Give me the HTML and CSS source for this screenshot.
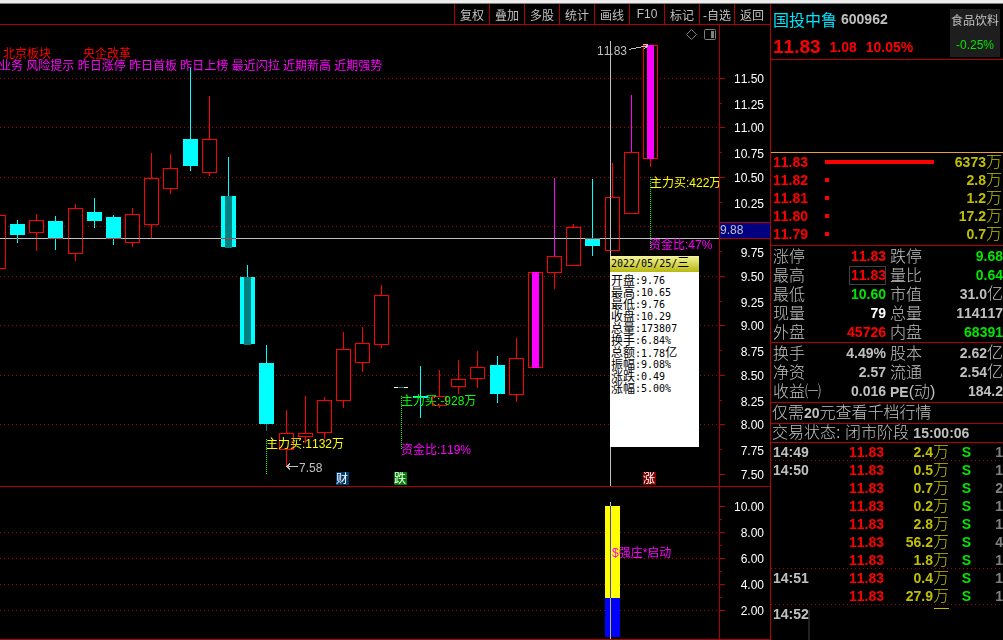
FILE: index.html
```html
<!DOCTYPE html>
<html lang="zh-CN">
<head>
<meta charset="utf-8">
<title>国投中鲁 600962</title>
<link rel="stylesheet" href="styles.css">
</head>
<body>
<div class="strip"></div>
<div class="app">
  <main class="left">
    <nav class="toolbar">
      <button type="button">复权</button><button type="button">叠加</button><button type="button">多股</button><button type="button">统计</button><button type="button">画线</button><button type="button">F10</button><button type="button">标记</button><button type="button">-自选</button><button type="button">返回</button>
    </nav>
    <section class="kline">
      <svg class="chart" viewBox="0 25 770 462">
        <defs><clipPath id="plot"><rect x="0" y="25" width="719" height="461"/></clipPath></defs>
        <path class="grid" d="M0 78.5H719M0 127.5H719M0 177.5H719M0 226.5H719M0 276.5H719M0 325.5H719M0 375.5H719M0 424.5H719"/>
        <path class="frame" d="M719.5 25V486M0 486.5H770M720 78.5h5M720 127.5h5M720 177.5h5M720 226.5h5M720 276.5h5M720 325.5h5M720 375.5h5M720 424.5h5M720 474.5h5M720 103.5h2M720 152.5h2M720 202.5h2M720 251.5h2M720 301.5h2M720 350.5h2M720 400.5h2M720 449.5h2"/>
        <!-- wicks -->
        <path class="up" d="M36.5 214V251M75.5 204V261M132.5 208V247M151.5 153V239M170.5 154V194M209.5 96V176M286.5 410V466M305.5 396V443M324.5 397V439M343.5 332V408M362.5 327V372M381.5 285V348M439.5 370V408M458.5 360V394M477.5 351V388M516.5 338V402M554.5 273V289M573.5 224V227M612.5 163V197M650.5 159V167"/>
        <path class="down" d="M17.5 220V243M55.5 216V250M94.5 198V228M113.5 215V245M190.5 68V171M228.5 157V196M247.5 265V277M266.5 345V363M420.5 366V418M497.5 356V403M592.5 179V256M413 396.5h15M413 397.5h15"/>
        <path class="hot" d="M554.5 178V256M631.5 95V152"/>
        <path class="deep" d="M266.5 424V431"/>
        <!-- rising bodies -->
        <g class="up">
          <rect x="-9.5" y="215.5" width="15" height="53"/><rect x="29.5" y="220.5" width="14" height="12"/>
          <rect x="68.5" y="208.5" width="14" height="45"/><rect x="125.5" y="214.5" width="14" height="28"/>
          <rect x="144.5" y="178.5" width="14" height="46"/><rect x="163.5" y="168.5" width="14" height="20"/>
          <rect x="202.5" y="139.5" width="14" height="33"/><rect x="279.5" y="433.5" width="14" height="16"/>
          <rect x="298.5" y="433.5" width="14" height="3"/><rect x="317.5" y="400.5" width="14" height="32"/>
          <rect x="336.5" y="349.5" width="14" height="51"/><rect x="355.5" y="343.5" width="14" height="19"/>
          <rect x="374.5" y="295.5" width="14" height="49"/><rect x="432.5" y="396.5" width="14" height="9"/>
          <rect x="451.5" y="379.5" width="14" height="7"/><rect x="470.5" y="367.5" width="14" height="11"/>
          <rect x="509.5" y="358.5" width="14" height="36"/><rect x="528.5" y="272.5" width="14" height="95"/>
          <rect x="547.5" y="256.5" width="14" height="16"/><rect x="566.5" y="227.5" width="14" height="38"/>
          <rect x="605.5" y="197.5" width="14" height="53"/><rect x="624.5" y="152.5" width="14" height="61"/>
          <rect x="643.5" y="45.5" width="14" height="113"/>
        </g>
        <!-- falling bodies -->
        <path class="fall" d="M10 224h15v11h-15zM48 221h15v18h-15zM87 212h15v9h-15zM106 217h15v22h-15zM183 139h15v27h-15zM221 196h15v51h-15zM240 277h15v67h-15zM259 363h15v61h-15zM490 365h15v29h-15zM585 238h15v8h-15z"/>
        <path class="core" d="M225 196h7v52h-7zM244 277h7v68h-7zM398 387h6v1h-6z"/>
        <path class="surge" d="M532 272h7v96h-7zM647 45h7v114h-7z"/>
        <path class="flat" d="M394 387h4v1h-4zM404 387h4v1h-4z"/>
        <path class="drop" d="M266.5 439V474M401.5 396V450M650.5 177V248"/>
        <!-- crosshair -->
        <path class="cross" d="M0 238.5H719M610.5 41V486"/>
        <g class="note" clip-path="url(#plot)">
          <text class="red" x="3" y="58">北京板块</text><text class="red" x="83" y="58">央企改革</text>
          <text class="mag" x="-1" y="70">业务 风险提示 昨日涨停 昨日首板 昨日上榜 最近闪拉 近期新高 近期强势</text>
          <text class="yel" x="266" y="448">主力买:1132万</text>
          <text class="grn" x="401" y="405">主力买:-928万</text>
          <text class="mag" x="401" y="454">资金比:119%</text>
          <text class="yel" x="650" y="187">主力买:422万</text>
          <text class="mag" x="649" y="249">资金比:47%</text>
          <text class="gry" x="597" y="55">11.83</text><text class="gry" x="299" y="472">7.58</text>
        </g>
        <path class="arrow" d="M629 49.5L648 45.5M643 44.5H648M644 49L648 46M287 466.5H298M290 463.5L287 466.5L290 469.5"/>
        <path class="icon" d="M691.5 29.5L696.5 34.5L691.5 39.5L686.5 34.5Z"/>
        <rect class="icon" x="704.5" y="29.5" width="11" height="10" rx="1"/><rect class="iconfill" x="711" y="31" width="3" height="7"/>
        <g class="tag">
          <rect x="336" y="472" width="13" height="13" fill="#003870"/><text x="336" y="483">财</text>
          <rect x="394" y="472" width="13" height="13" fill="#008000"/><text x="394" y="483">跌</text>
          <rect x="643" y="472" width="13" height="13" fill="#800000"/><text x="643" y="483">涨</text>
        </g>
        <g class="scale">
          <text x="764" y="83">11.50</text><text x="764" y="109">11.25</text><text x="764" y="132">11.00</text><text x="764" y="158">10.75</text><text x="764" y="182">10.50</text><text x="764" y="208">10.25</text>
          <text x="764" y="257">9.75</text><text x="764" y="281">9.50</text><text x="764" y="307">9.25</text><text x="764" y="330">9.00</text><text x="764" y="356">8.75</text><text x="764" y="380">8.50</text><text x="764" y="406">8.25</text><text x="764" y="429">8.00</text><text x="764" y="455">7.75</text><text x="764" y="479">7.50</text>
        </g>
        <rect x="720" y="222" width="50" height="17" fill="#000080"/>
        <path class="frame" d="M720 222.5H770M720 238.5H770"/>
        <text class="gry" x="720" y="234">9.88</text>
      </svg>
      <aside class="tip">
        <h2>2022/05/25/<span>三</span></h2>
        <dl>
          <div><dt>开盘</dt><dd>:9.76</dd></div>
          <div><dt>最高</dt><dd>:10.65</dd></div>
          <div><dt>最低</dt><dd>:9.76</dd></div>
          <div><dt>收盘</dt><dd>:10.29</dd></div>
          <div><dt>总量</dt><dd>:173807</dd></div>
          <div><dt>换手</dt><dd>:6.84%</dd></div>
          <div><dt>总额</dt><dd>:1.78<span>亿</span></dd></div>
          <div><dt>振幅</dt><dd>:9.08%</dd></div>
          <div><dt>涨跌</dt><dd>:0.49</dd></div>
          <div><dt>涨幅</dt><dd>:5.00%</dd></div>
        </dl>
      </aside>
    </section>
    <section class="indicator">
      <svg class="chart" viewBox="0 487 770 153">
        <path class="grid" d="M0 532.5H719M0 558.5H719M0 584.5H719M0 610.5H719"/>
        <path class="frame" d="M719.5 487V639M0 639.5H770M720 506.5h5M720 532.5h5M720 558.5h5M720 584.5h5M720 610.5h5M720 519.5h2M720 545.5h2M720 571.5h2M720 597.5h2"/>
        <rect x="605" y="506" width="15" height="92" fill="#ff0"/><rect x="605" y="598" width="15" height="39" fill="#00f"/>
        <path class="cross" d="M610.5 502V639"/>
        <text class="mag" x="612" y="557">$强庄*启动</text>
        <g class="scale"><text x="764" y="511">10.00</text><text x="764" y="537">8.00</text><text x="764" y="563">6.00</text><text x="764" y="589">4.00</text><text x="764" y="615">2.00</text></g>
      </svg>
    </section>
  </main>

  <aside class="side">
    <header class="quote">
      <div class="ident"><h1>国投中鲁</h1><b>600962</b></div>
      <div class="price"><strong>11.83</strong><b>1.08</b><b>10.05%</b></div>
      <a class="sector" href="#sector">食品饮料<span>-0.25%</span></a>
    </header>
    <div class="blank"></div>
    <ul class="book">
      <li><b>11.83</b><i style="width:109px"></i><span><b>6373</b>万</span></li>
      <li><b>11.82</b><i style="width:4px"></i><span><b>2.8</b>万</span></li>
      <li><b>11.81</b><i style="width:4px"></i><span><b>1.2</b>万</span></li>
      <li><b>11.80</b><i style="width:4px"></i><span><b>17.2</b>万</span></li>
      <li><b>11.79</b><i style="width:4px"></i><span><b>0.7</b>万</span></li>
    </ul>
    <dl class="stats">
      <dt>涨停</dt><dd class="red">11.83</dd><dt>跌停</dt><dd class="green">9.68</dd>
      <dt>最高</dt><dd class="red boxed">11.83</dd><dt>量比</dt><dd class="green">0.64</dd>
      <dt>最低</dt><dd class="green">10.60</dd><dt>市值</dt><dd>31.0<span>亿</span></dd>
      <dt>现量</dt><dd class="white">79</dd><dt>总量</dt><dd>114117</dd>
      <dt>外盘</dt><dd class="red">45726</dd><dt>内盘</dt><dd class="green">68391</dd>
    </dl>
    <dl class="stats">
      <dt>换手</dt><dd>4.49%</dd><dt>股本</dt><dd>2.62<span>亿</span></dd>
      <dt>净资</dt><dd>2.57</dd><dt>流通</dt><dd>2.54<span>亿</span></dd>
      <dt>收益㈠</dt><dd>0.016</dd><dt><b>PE</b>(动)</dt><dd>184.2</dd>
    </dl>
    <p class="line">仅需<b>20</b>元查看千档行情</p>
    <p class="line status">交易状态: 闭市阶段 <b>15:00:06</b></p>
    <table class="tape">
      <tbody>
        <tr class="cut"><th>14:49</th><td>11.83</td><td>2.4<span>万</span></td><td>S</td><td>1</td></tr>
        <tr><th>14:50</th><td>11.83</td><td>0.5<span>万</span></td><td>S</td><td>1</td></tr>
        <tr><th></th><td>11.83</td><td>0.7<span>万</span></td><td>S</td><td>2</td></tr>
        <tr><th></th><td>11.83</td><td>0.2<span>万</span></td><td>S</td><td>1</td></tr>
        <tr><th></th><td>11.83</td><td>2.8<span>万</span></td><td>S</td><td>1</td></tr>
        <tr><th></th><td>11.83</td><td>56.2<span>万</span></td><td>S</td><td>4</td></tr>
        <tr class="cut"><th></th><td>11.83</td><td>1.8<span>万</span></td><td>S</td><td>1</td></tr>
        <tr><th>14:51</th><td>11.83</td><td>0.4<span>万</span></td><td>S</td><td>1</td></tr>
        <tr class="cut"><th></th><td>11.83</td><td>27.9<span>万</span></td><td>S</td><td>1</td></tr>
        <tr class="next"><th>14:52</th><td></td><td><div class="dash"></div></td><td></td><td></td></tr>
      </tbody>
    </table>
    <div class="rest"></div>
  </aside>
</div>
</body>
</html>
```
FILE: styles.css
```css
* { box-sizing: border-box; margin: 0; padding: 0; }
body {
  display: flex; flex-direction: column; min-height: 100vh;
  background: #000; color: #c0c0c0; overflow-x: hidden;
  font: 12px "Liberation Sans", "Noto Sans CJK SC", sans-serif;
  font-kerning: none;
}
.strip { height: 4px; background: #ededed; border-bottom: 1px solid #808080; }
.app { display: flex; flex: 1; }
.left { flex: 1; min-width: 0; }

.toolbar { display: flex; justify-content: flex-end; height: 21px; padding-right: 1px; border-bottom: 1px solid #b00000; }
.toolbar button {
  width: 35px; border: 0; border-left: 1px solid #b00000; background: none;
  color: #c0c0c0; font: inherit; white-space: nowrap; text-align: center;
}
.kline { position: relative; }
.chart { display: block; width: 100%; height: auto; }
.chart path, .chart rect { shape-rendering: crispEdges; }
.grid { stroke: #b00000; stroke-dasharray: 1 3; fill: none; }
.frame { stroke: #b00000; fill: none; }
.up, .up rect { stroke: #f00; fill: #000; }
.down { stroke: #0ff; fill: none; }
.hot { stroke: #f0f; fill: none; }
.deep { stroke: #008080; fill: none; }
.fall { fill: #0ff; }
.core { fill: #008080; }
.surge { fill: #f0f; }
.flat { fill: #fff; }
.drop { stroke: #0f0; stroke-dasharray: 1 1; fill: none; }
.cross { stroke: #c0c0c0; fill: none; mix-blend-mode: difference; }
.arrow { stroke: #c0c0c0; fill: none; }
.chart .icon { stroke: #808080; fill: none; shape-rendering: auto; }
.iconfill { fill: #808080; }
.chart .red { fill: #f00; }
.mag { fill: #f0f; }
.yel { fill: #ff0; }
.grn { fill: #0f0; }
.gry { fill: #c0c0c0; }
.tag text { fill: #fff; }
.scale text { fill: #fff; text-anchor: end; }

.tip {
  position: absolute; top: 231px; right: 71px; width: 89px; height: 191px;
  background: #fff; color: #000; font: 10px "DejaVu Sans Mono", "Noto Sans CJK SC", monospace;
}
.tip h2 {
  height: 16px; padding-left: 1px; font: inherit; line-height: 16px; white-space: nowrap;
  background: linear-gradient(#f4f49c, #b8b810);
}
.tip span, .tip dt { font-size: 12px; line-height: 12px; }
.tip dl { padding: 3px 0 0 1px; }
.tip dl div { display: flex; height: 12px; line-height: 12px; }

.side { width: 233px; border-left: 1px solid #b00000; overflow: hidden; font-size: 16px; font-weight: 300; white-space: nowrap; }
.side b, .side dd, .side td, .side th { font-size: 14px; font-weight: 700; }
.quote {
  display: grid; grid-template-columns: 1fr 50px; grid-template-rows: 30px 25px;
  padding-left: 2px; padding-right: 3px; height: 56px; border-bottom: 1px solid #b00000;
}
.ident { display: flex; align-items: center; gap: 4px; }
.ident h1 { font-size: 16px; font-weight: 400; color: #00e5ff; }
.price { grid-row: 2; display: flex; align-items: center; gap: 9px; color: #f00; }
.price strong { font-size: 19px; font-weight: 700; }
.sector {
  grid-column: 2; grid-row: 1 / 3; height: 48px; margin-top: 5px; background: #1e1e1e;
  color: #c0c0c0; font-size: 12px; line-height: 24px; font-weight: 400; text-align: center; text-decoration: none;
}
.sector span { display: block; color: #00e600; }
.blank { height: 93px; border-bottom: 1px solid #e8a030; }
.book { list-style: none; padding-left: 2px; padding-right: 1px; height: 93px; border-bottom: 1px solid #b00000; }
.book li { display: grid; grid-template-columns: 52px 1fr auto; align-items: center; height: 18px; line-height: 18px; }
.book li > b { color: #f00; }
.book i { height: 4px; background: #f00; }
.book span { color: #c0c000; }
.stats {
  display: grid; grid-template-columns: 50px 63px 50px 63px;
  padding: 1px 0 0 2px; border-bottom: 1px solid #b00000; line-height: 19px;
}
.stats dt:nth-of-type(even) { padding-left: 4px; }
.stats dd { text-align: right; height: 19px; }
.stats dd:nth-of-type(even) { margin-right: -4px; }
.stats dd span, .tape span { font-size: 16px; font-weight: 300; line-height: 0; }
.stats .boxed { outline: 1px solid #404040; outline-offset: -1px; justify-self: end; padding-left: 2px; }
.red { color: #f00; }
.green { color: #00e600; }
.white { color: #fff; }
.line { height: 21px; padding-left: 1px; line-height: 20px; border-bottom: 1px solid #b00000; }
.status { height: 19px; line-height: 18px; }
.tape { border-collapse: collapse; table-layout: fixed; width: 232px; }
.tape tr { height: 18px; line-height: 17px; }
.tape th { width: 50px; padding-left: 2px; text-align: left; }
.tape td { text-align: right; height: 18px; }
.tape td:nth-child(2) { width: 63px; color: #f00; }
.tape td:nth-child(3) { width: 65px; color: #c0c000; }
.tape td:nth-child(4) { width: 22px; color: #00e600; }
.tape td:nth-child(5) { width: 32px; color: #808080; }
.tape .cut { background: repeating-linear-gradient(90deg, #b00000 0 1px, #000 1px 4px) 0 100% / 100% 1px no-repeat; }
.tape .next { background: linear-gradient(#202020, #202020) 37px 100% / 2px 13px no-repeat; }
.tape .next td { vertical-align: top; }
.dash { width: 15px; height: 1px; margin: 3px 0 0 auto; background: #c0c000; }
.rest { width: 39px; height: 17px; border-right: 2px solid #202020; }
```
